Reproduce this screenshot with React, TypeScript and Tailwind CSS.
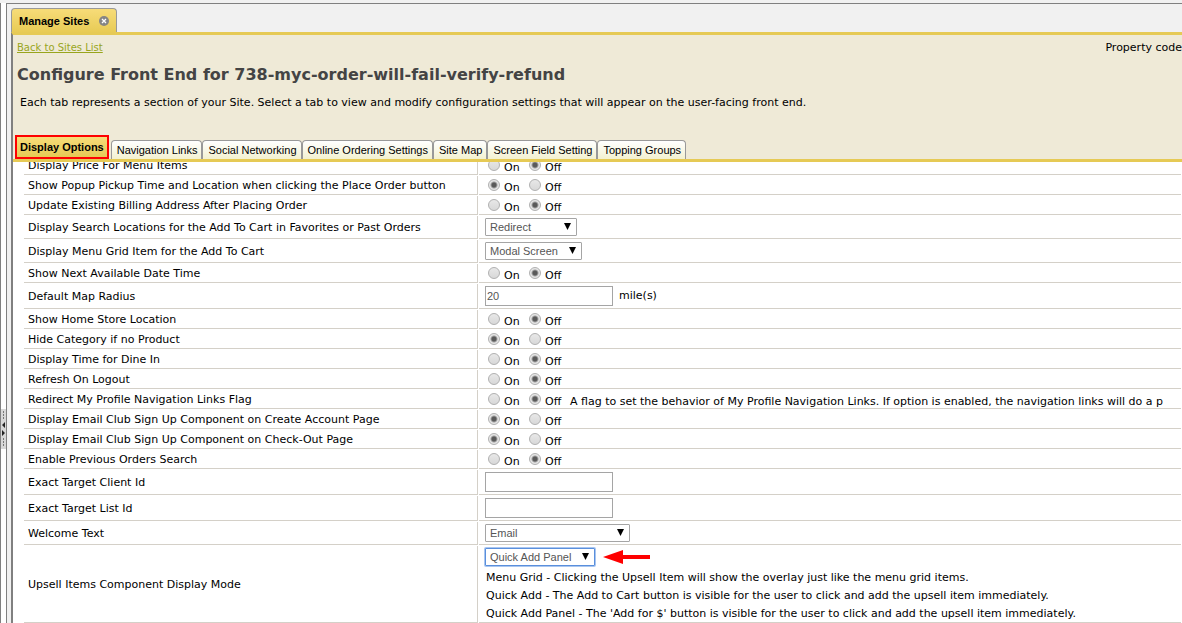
import { useState } from "react";

type Flag = { kind: "flag"; label: string; on: boolean; note?: string };
type Choice = { kind: "choice"; label: string; options: string[]; width: string; focused?: boolean; hints?: string[] };
type Text = { kind: "text"; label: string; value: string; unit?: string };
type Setting = Flag | Choice | Text;

const SETTINGS: Setting[] = [
  { kind: "flag", label: "Display Price For Menu Items", on: false },
  { kind: "flag", label: "Show Popup Pickup Time and Location when clicking the Place Order button", on: true },
  { kind: "flag", label: "Update Existing Billing Address After Placing Order", on: false },
  { kind: "choice", label: "Display Search Locations for the Add To Cart in Favorites or Past Orders", options: ["Redirect"], width: "w-[92px]" },
  { kind: "choice", label: "Display Menu Grid Item for the Add To Cart", options: ["Modal Screen"], width: "w-[97px]" },
  { kind: "flag", label: "Show Next Available Date Time", on: false },
  { kind: "text", label: "Default Map Radius", value: "20", unit: "mile(s)" },
  { kind: "flag", label: "Show Home Store Location", on: false },
  { kind: "flag", label: "Hide Category if no Product", on: true },
  { kind: "flag", label: "Display Time for Dine In", on: false },
  { kind: "flag", label: "Refresh On Logout", on: false },
  {
    kind: "flag",
    label: "Redirect My Profile Navigation Links Flag",
    on: false,
    note: "A flag to set the behavior of My Profile Navigation Links. If option is enabled, the navigation links will do a p",
  },
  { kind: "flag", label: "Display Email Club Sign Up Component on Create Account Page", on: true },
  { kind: "flag", label: "Display Email Club Sign Up Component on Check-Out Page", on: true },
  { kind: "flag", label: "Enable Previous Orders Search", on: false },
  { kind: "text", label: "Exact Target Client Id", value: "" },
  { kind: "text", label: "Exact Target List Id", value: "" },
  { kind: "choice", label: "Welcome Text", options: ["Email"], width: "w-[145px]" },
  {
    kind: "choice",
    label: "Upsell Items Component Display Mode",
    options: ["Quick Add Panel", "Quick Add", "Menu Grid"],
    width: "w-[110px]",
    focused: true,
    hints: [
      "Menu Grid - Clicking the Upsell Item will show the overlay just like the menu grid items.",
      "Quick Add - The Add to Cart button is visible for the user to click and add the upsell item immediately.",
      "Quick Add Panel - The 'Add for $' button is visible for the user to click and add the upsell item immediately.",
    ],
  },
];

const TABS = ["Navigation Links", "Social Networking", "Online Ordering Settings", "Site Map", "Screen Field Setting", "Topping Groups"];

const RADIO =
  "size-3 shrink-0 appearance-none rounded-full border border-[#b0b0b0] bg-linear-to-b from-[#e8e8e8] to-[#d8d8d8] checked:bg-[radial-gradient(circle,#5a5a5a_0_2px,#e6e6e6_4px)]";

function FlagField({ id, setting }: { id: string; setting: Flag }) {
  const [on, setOn] = useState(setting.on);
  return (
    <div className="flex h-[18px] items-start pt-[3px] pl-[3px]">
      <input id={`${id}-on`} name={id} type="radio" checked={on} onChange={() => setOn(true)} className={RADIO} />
      <label htmlFor={`${id}-on`} className="ml-1 w-[25px] pt-px leading-4">On</label>
      <input id={`${id}-off`} name={id} type="radio" checked={!on} onChange={() => setOn(false)} className={RADIO} />
      <label htmlFor={`${id}-off`} className="ml-1 w-[25px] pt-px leading-4">Off</label>
      {setting.note && <span className="pt-px leading-4">{setting.note}</span>}
    </div>
  );
}

function PointerArrow() {
  return (
    <svg className="ml-2 h-4 w-12" viewBox="0 0 48 16" aria-hidden="true">
      <path d="M0 8 20 1V6H47V10H20V15Z" fill="#fe0000" />
    </svg>
  );
}

function ChoiceField({ id, setting }: { id: string; setting: Choice }) {
  return (
    <div className={setting.hints ? "pt-[2px]" : "py-[2px]"}>
      <div className="flex h-[18px] items-center">
        <div className={`relative h-full ${setting.width}`}>
          <select
            id={id}
            className={`block h-full w-full appearance-none rounded-[1px] border bg-white pl-1 font-['Liberation_Sans',Arial,sans-serif] text-[11px] leading-4 text-[#555] outline-none ${
              setting.focused ? "border-[#5a8fdc] ring-1 ring-[#a9c6f0]" : "border-[#a5a5a5]"
            }`}
          >
            {setting.options.map((o) => (
              <option key={o}>{o}</option>
            ))}
          </select>
          <svg className="pointer-events-none absolute top-[5px] right-[6px] h-[7px] w-[7px]" viewBox="0 0 7 7" aria-hidden="true">
            <path d="M0 0H7L3.5 7Z" fill="#000" />
          </svg>
        </div>
        {setting.focused && <PointerArrow />}
      </div>
      {setting.hints && (
        <div className="-mb-px pt-[3px] pl-px leading-[18px]">
          {setting.hints.map((h) => (
            <p key={h}>{h}</p>
          ))}
        </div>
      )}
    </div>
  );
}

function TextField({ id, setting }: { id: string; setting: Text }) {
  return (
    <div className="flex items-center gap-[6px] py-[2px]">
      <input
        id={id}
        type="text"
        defaultValue={setting.value}
        className="h-5 w-32 border border-[#a5a5a5] bg-white pl-px font-['Liberation_Sans',Arial,sans-serif] text-[11px] text-[#555] outline-none"
      />
      {setting.unit && <span>{setting.unit}</span>}
    </div>
  );
}

function SettingRow({ index, setting }: { index: number; setting: Setting }) {
  const id = `setting-${index}`;
  return (
    <tr>
      <th scope="row" className="w-[454px] min-w-[454px] border-r border-b border-[#d4d0c8] p-0 pt-[2px] pl-1 text-left align-middle font-normal">
        {setting.kind === "flag" ? setting.label : <label htmlFor={id}>{setting.label}</label>}
      </th>
      <td className="border-b border-[#d4d0c8] p-0 pl-[6px]">
        {setting.kind === "flag" && <FlagField id={id} setting={setting} />}
        {setting.kind === "choice" && <ChoiceField id={id} setting={setting} />}
        {setting.kind === "text" && <TextField id={id} setting={setting} />}
      </td>
    </tr>
  );
}

function Splitter() {
  return (
    <div className="flex w-[6px] shrink-0 flex-col justify-center border-l border-[#808080] bg-white pt-[232px]">
      <svg className="h-10 w-[5px]" viewBox="0 0 5 40" aria-hidden="true">
        <rect width="5" height="40" fill="#d8d8d8" />
        <path d="M2.5 2V10M2.5 29V37" stroke="#777" strokeDasharray="2 1" />
        <path d="M4 13V19L1 16ZM1 21V27L4 24Z" fill="#222" />
      </svg>
    </div>
  );
}

export default function App() {
  return (
    <div className="flex h-screen overflow-hidden bg-[#f1f1f1] pt-[3px] font-['DejaVu_Sans',Verdana,sans-serif] text-[11px] leading-4 whitespace-nowrap text-black">
      <Splitter />
      <main className="flex min-w-0 flex-1 flex-col border-t border-l border-[#808080] pl-1">
        <div className="flex h-7 shrink-0 items-end">
          <div className="flex h-6 items-center gap-[10px] rounded-t-[4px] border border-b-0 border-[#999] bg-linear-to-b from-[#f7dc78] to-[#e8cb55] px-[7px] font-['Liberation_Sans',Arial,sans-serif] font-bold">
            <span>Manage Sites</span>
            <button type="button" aria-label="Close tab">
              <svg className="block size-[10px]" viewBox="0 0 10 10">
                <circle cx="5" cy="5" r="5" fill="#858585" />
                <path d="M3 3 7 7M7 3 3 7" stroke="#fff" strokeWidth="1.3" />
              </svg>
            </button>
          </div>
        </div>
        <div className="flex min-h-0 flex-1 flex-col border-t-[3px] border-l-2 border-t-[#e6ca55] border-l-[#808080] bg-white">
          <header className="shrink-0 border-b-[3px] border-[#e6ca55] bg-[#efead7]">
            <div className="flex justify-between pt-[5px] pl-1">
              <a href="#sites" className="text-[10px] text-[#98a51d] underline">Back to Sites List</a>
              <span>Property code</span>
            </div>
            <h1 className="pt-[7px] pl-1 text-[16px] leading-6 font-bold text-[#444]">Configure Front End for 738-myc-order-will-fail-verify-refund</h1>
            <p className="pt-2 pl-[7px]">Each tab represents a section of your Site. Select a tab to view and modify configuration settings that will appear on the user-facing front end.</p>
            <div role="tablist" className="flex items-end pt-6 pl-[2px] font-['Liberation_Sans',Arial,sans-serif]">
              <button type="button" role="tab" aria-selected="true" className="mr-[2px] h-6 border-2 border-[#fe0000] bg-linear-to-b from-[#f7dc78] to-[#e6ca55] px-[3px] text-[11px] font-bold">
                Display Options
              </button>
              {TABS.map((t) => (
                <button key={t} type="button" role="tab" aria-selected="false" className="h-[19px] rounded-t-[4px] border border-b-0 border-[#999] bg-linear-to-b from-white to-[#f3f1d0] pr-1 pl-[5px] text-[11px]">
                  {t}
                </button>
              ))}
            </div>
          </header>
          <div className="min-h-0 flex-1 overflow-hidden pl-[10px]">
            <table className="-mt-[7px] w-full border-separate border-spacing-px">
              <tbody>
                {SETTINGS.map((s, i) => (
                  <SettingRow key={s.label} index={i} setting={s} />
                ))}
              </tbody>
            </table>
          </div>
        </div>
      </main>
    </div>
  );
}
